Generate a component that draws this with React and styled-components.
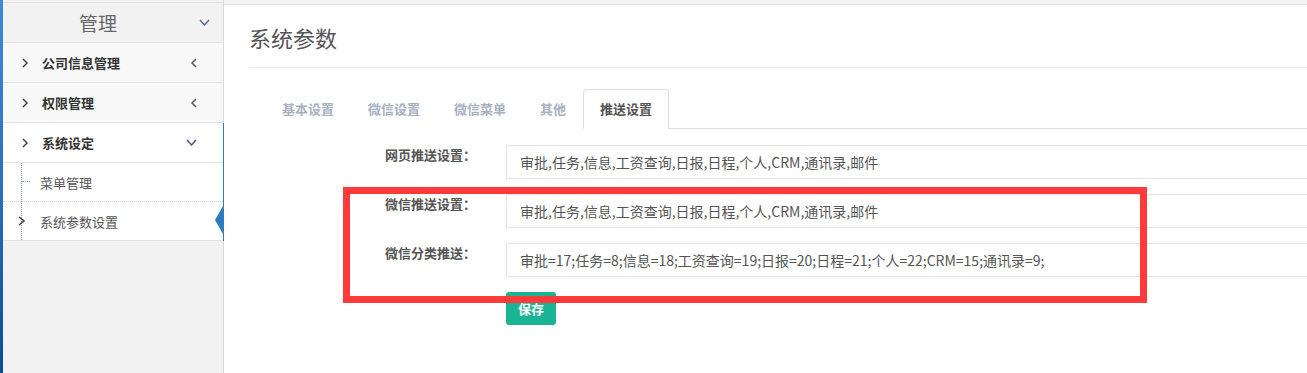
import React from "react";
import styled, { createGlobalStyle } from "styled-components";

const Global = createGlobalStyle`
  html, body { margin: 0; padding: 0; background: #fff; }
  body { font-family: "Noto Sans CJK SC", "Noto Sans", sans-serif; overflow: hidden; }
  * { box-sizing: border-box; }
`;

const Page = styled.div`
  display: flex;
  width: 1307px;
  height: 373px;
  overflow: hidden;
`;

const Stripe = styled.div`
  width: 3px;
  flex: none;
  background: linear-gradient(180deg, #3d8ad8 0%, #2a6fc0 50%, #0f4a98 100%);
`;

const Sidebar = styled.aside`
  width: 221px;
  flex: none;
  background: #f2f2f2;
  border-right: 1px solid #d9d9d9;
  padding-top: 2px;
`;

const SideHeader = styled.div`
  height: 41px;
  border-top: 1px solid #e2e2e2;
  border-bottom: 1px solid #e2e2e2;
  background: #f2f2f2;
  display: flex;
  align-items: center;
  position: relative;
  padding-right: 30px;
`;

const HeaderTitle = styled.span`
  flex: 1;
  text-align: center;
  font-size: 19px;
  color: #666;
  line-height: 1;
`;

const HeaderArrow = styled.span`
  position: absolute;
  right: 13px;
  top: 16px;
  display: flex;
`;

const Row = styled.div`
  height: 40px;
  border-bottom: 1px solid #e2e2e2;
  background: ${(p) => (p.$open ? "#fff" : "#f8f8f8")};
  display: flex;
  align-items: center;
  padding-left: 19px;
  padding-right: 26px;
  font-size: 13px;
  font-weight: bold;
  color: #333;
`;

const RowLabel = styled.span`
  flex: 1;
  margin-left: 14px;
`;

const Group = styled.div`
  position: relative;
  &::after {
    content: "";
    position: absolute;
    top: 0;
    bottom: 0;
    right: -2px;
    width: 2px;
    background: #2a7dc0;
  }
`;

const SubMenu = styled.div`
  position: relative;
  background: #fff;
  border-bottom: 1px solid #e2e2e2;
  &::before {
    content: "";
    position: absolute;
    left: 18px;
    top: 0;
    bottom: 0;
    border-left: 1px dotted #7c98b8;
  }
`;

const SubItem = styled.div`
  position: relative;
  height: ${(p) => (p.$last ? "38px" : "39px")};
  display: flex;
  align-items: center;
  padding-left: 37px;
  font-size: 13px;
  color: #555;
  border-bottom: ${(p) => (p.$last ? "none" : "1px dotted #cfcfcf")};
  &::before {
    content: ${(p) => (p.$active ? "none" : '""')};
    position: absolute;
    left: 19px;
    top: 18px;
    width: 8px;
    border-top: 1px dotted #7c98b8;
  }
  &::after {
    content: ${(p) => (p.$active ? '""' : "none")};
    position: absolute;
    right: 0;
    top: 4px;
    border-style: solid;
    border-width: 14px 8px 14px 0;
    border-color: transparent #2a7dc0 transparent transparent;
  }
`;

const SubChevron = styled.span`
  position: absolute;
  left: 15px;
  top: 14px;
  display: flex;
`;

const Main = styled.main`
  flex: 1;
  position: relative;
  overflow: hidden;
  background: #fff;
`;

const TopStrip = styled.div`
  height: 5px;
  background: #f3f3f4;
  border-bottom: 1px solid #e4e4e4;
`;

const Content = styled.div`
  padding-left: 25px;
`;

const Title = styled.h2`
  margin: 17px 0 0;
  font-size: 22px;
  font-weight: normal;
  line-height: 30px;
  color: #555;
`;

const Rule = styled.div`
  margin-top: 15px;
  height: 1px;
  background: #e7eaec;
`;

const Tabs = styled.div`
  margin: 21px 0 0 16px;
  display: flex;
  border-bottom: 1px solid #ddd;
  height: 40px;
`;

const Tab = styled.div`
  padding: 0 16px;
  height: 40px;
  line-height: 38px;
  font-size: 13px;
  font-weight: bold;
  color: ${(p) => (p.$active ? "#555" : "#a7b1c2")};
  border: 1px solid ${(p) => (p.$active ? "#ddd" : "transparent")};
  border-bottom: none;
  border-radius: 4px 4px 0 0;
  background: #fff;
  margin-bottom: -1px;
  position: relative;
`;

const Form = styled.div`
  margin: 16px 0 0 16px;
  width: 1100px;
  display: grid;
  grid-template-columns: 211px 1fr;
  column-gap: 30px;
  row-gap: 15px;
`;

const Label = styled.label`
  text-align: right;
  font-size: 13px;
  font-weight: bold;
  color: #555;
  line-height: 20px;
`;

const Field = styled.div`
  height: 34px;
  border: 1px solid #e5e6e7;
  padding: 0 13px;
  display: flex;
  align-items: center;
  font-size: 14px;
  color: #555;
  white-space: nowrap;
`;

const SaveButton = styled.button`
  grid-column: 2;
  justify-self: start;
  width: 50px;
  height: 33px;
  border: none;
  border-radius: 3px;
  background: #1ab394;
  color: #fff;
  font-family: inherit;
  font-size: 13px;
  font-weight: bold;
  padding: 0;
`;

const Highlight = styled.div`
  position: absolute;
  left: 119px;
  top: 187px;
  width: 804px;
  height: 116px;
  border: 7px solid #ff3a3a;
  pointer-events: none;
`;

const Chevron = ({ dir, color = "#444", w = 6, h = 10 }) => {
  const pts =
    dir === "right"
      ? `1,1 ${w - 1},${h / 2} 1,${h - 1}`
      : dir === "left"
      ? `${w - 1},1 1,${h / 2} ${w - 1},${h - 1}`
      : `1,1 ${w / 2},${h - 1} ${w - 1},1`;
  return (
    <svg width={w} height={h} viewBox={`0 0 ${w} ${h}`}>
      <polyline points={pts} fill="none" stroke={color} strokeWidth="1.5" />
    </svg>
  );
};

const values = "审批,任务,信息,工资查询,日报,日程,个人,CRM,通讯录,邮件";

export default function App() {
  return (
    <>
      <Global />
      <Page>
        <Stripe />
        <Sidebar>
          <SideHeader>
            <HeaderTitle>管理</HeaderTitle>
            <HeaderArrow>
              <Chevron dir="down" color="#5a6a88" w={11} h={7} />
            </HeaderArrow>
          </SideHeader>
          <Row>
            <Chevron dir="right" />
            <RowLabel>公司信息管理</RowLabel>
            <Chevron dir="left" color="#555" w={6} h={10} />
          </Row>
          <Row>
            <Chevron dir="right" />
            <RowLabel>权限管理</RowLabel>
            <Chevron dir="left" color="#555" w={6} h={10} />
          </Row>
          <Group>
            <Row $open>
              <Chevron dir="right" />
              <RowLabel>系统设定</RowLabel>
              <Chevron dir="down" color="#55558a" w={11} h={7} />
            </Row>
            <SubMenu>
              <SubItem>菜单管理</SubItem>
              <SubItem $active $last>
                <SubChevron>
                  <Chevron dir="right" color="#445" w={7} h={10} />
                </SubChevron>
                系统参数设置
              </SubItem>
            </SubMenu>
          </Group>
        </Sidebar>
        <Main>
          <TopStrip />
          <Content>
            <Title>系统参数</Title>
            <Rule />
            <Tabs>
              <Tab>基本设置</Tab>
              <Tab>微信设置</Tab>
              <Tab>微信菜单</Tab>
              <Tab>其他</Tab>
              <Tab $active>推送设置</Tab>
            </Tabs>
            <Form>
              <Label>网页推送设置：</Label>
              <Field>{values}</Field>
              <Label>微信推送设置：</Label>
              <Field>{values}</Field>
              <Label>微信分类推送：</Label>
              <Field>审批=17;任务=8;信息=18;工资查询=19;日报=20;日程=21;个人=22;CRM=15;通讯录=9;</Field>
              <SaveButton>保存</SaveButton>
            </Form>
          </Content>
          <Highlight />
        </Main>
      </Page>
    </>
  );
}
